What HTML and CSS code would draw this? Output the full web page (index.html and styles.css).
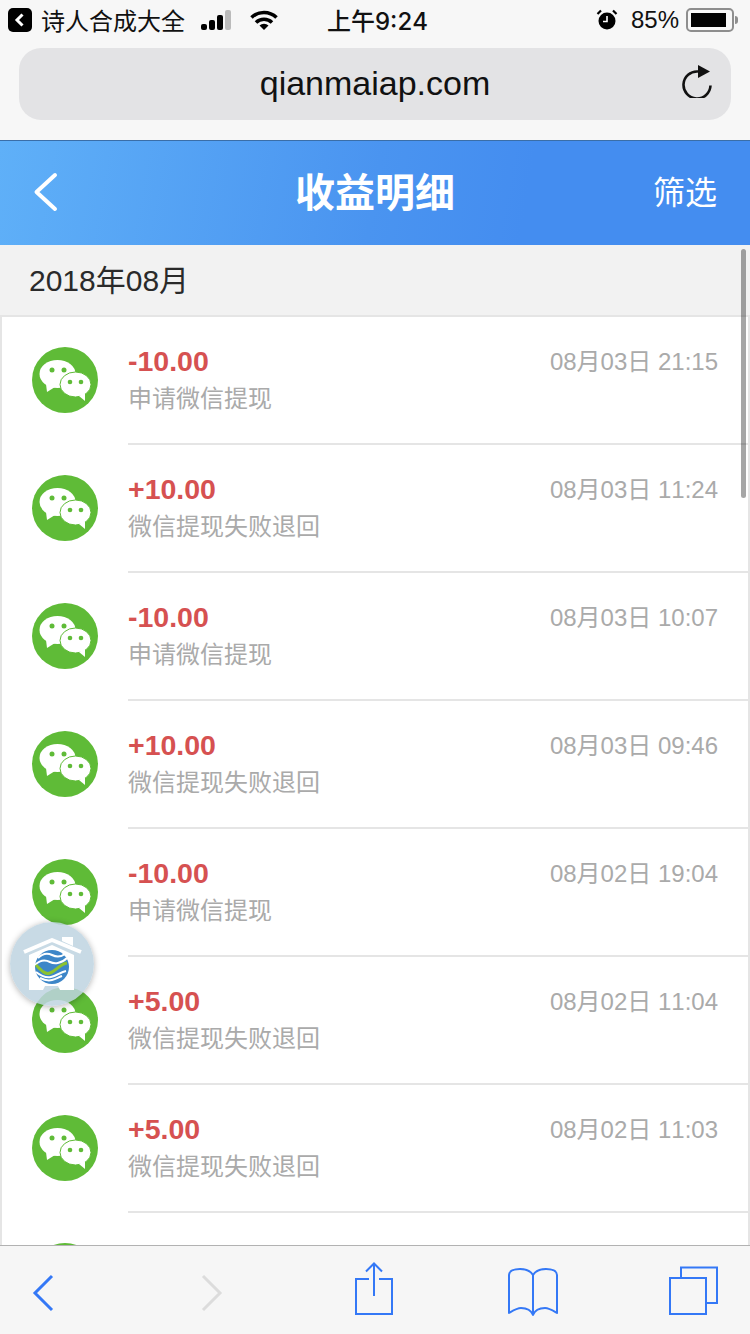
FILE: index.html
```html
<!DOCTYPE html>
<html lang="zh-CN">
<head>
  <meta charset="UTF-8" />
  <meta name="viewport" content="width=device-width, initial-scale=1.0"/>
  <title>收益明细</title>
  <link rel="stylesheet" href="styles.css">
</head>
<body>
  <svg class="defs" width="0" height="0">
    <symbol id="wechat" viewBox="0 0 66 66">
      <circle cx="33" cy="33" r="33" fill="#5fbb37"/>
      <ellipse cx="25.500" cy="27" rx="18" ry="14" fill="#fff"/>
      <path d="M14 37l1 8 8-5z" fill="#fff"/>
      <ellipse cx="43.500" cy="37.500" rx="15.500" ry="12.500" fill="#fff" stroke="#5fbb37" stroke-width="1"/>
      <path d="M47 49l6 5 0-8z" fill="#fff"/>
      <circle cx="20" cy="23" r="2.500" fill="#5fbb37"/>
      <circle cx="32" cy="23" r="2.500" fill="#5fbb37"/>
      <circle cx="38" cy="35" r="2.300" fill="#5fbb37"/>
      <circle cx="49" cy="35" r="2.300" fill="#5fbb37"/>
    </symbol>
  </svg>

  <div class="statusbar">
    <span class="app-back">
      <svg width="24" height="24" viewBox="0 0 24 24"><rect width="24" height="24" rx="5" fill="#000"/><path d="M14.500 6.500L9 12l5.500 5.500" fill="none" stroke="#fff" stroke-width="3"/></svg>
    </span>
    <span class="app-name">诗人合成大全</span>
    <span class="signal"><i class="b1"></i><i class="b2"></i><i class="b3"></i><i class="b4"></i></span>
    <svg class="wifi" width="28" height="20" viewBox="0 0 28 20">
      <path d="M1.500 7.500a18 18 0 0 1 25 0" fill="none" stroke="#000" stroke-width="3.600"/>
      <path d="M6 12.500a11.500 11.500 0 0 1 16 0" fill="none" stroke="#000" stroke-width="3.600"/>
      <path d="M9.500 15.500a6.500 6.500 0 0 1 9 0L14 20z" fill="#000"/>
    </svg>
    <span class="clock">上午9:24</span>
    <svg class="alarm" width="22" height="22" viewBox="0 0 22 22">
      <circle cx="11" cy="12" r="8.500" fill="#000"/>
      <path d="M11 7v5.500H7" fill="none" stroke="#fff" stroke-width="1.600"/>
      <path d="M1.500 5L5 1.500M20.500 5L17 1.500" stroke="#000" stroke-width="2.200"/>
    </svg>
    <span class="percent">85%</span>
    <span class="battery"><span class="level"></span></span>
    <span class="battery-tip"></span>
  </div>

  <div class="urlwrap">
    <div class="urlbar">
      <span class="url">qianmaiap.com</span>
      <svg class="reload" width="32" height="36" viewBox="0 0 32 36">
        <path d="M18 9.500a13.500 13.500 0 1 0 12.500 14" fill="none" stroke="#111" stroke-width="2.600"/>
        <path d="M18 3l12 6.500-12 6.500z" fill="#111"/>
      </svg>
    </div>
  </div>

  <header class="topbar">
    <svg class="nav-back" width="28" height="42" viewBox="0 0 28 42"><path d="M22 4L3.500 21 22 38" fill="none" stroke="#fff" stroke-width="4" stroke-linecap="round" stroke-linejoin="round"/></svg>
    <h1>收益明细</h1>
    <span class="filter">筛选</span>
  </header>

  <main class="content">
    <div class="month">2018年08月</div>
    <ul class="list">
      <li class="item">
        <svg class="pay-icon"><use href="#wechat"/></svg>
        <div class="info">
          <div class="line"><span class="amount">-10.00</span><span class="time">08月03日 21:15</span></div>
          <div class="desc">申请微信提现</div>
        </div>
      </li>
      <li class="item">
        <svg class="pay-icon"><use href="#wechat"/></svg>
        <div class="info">
          <div class="line"><span class="amount">+10.00</span><span class="time">08月03日 11:24</span></div>
          <div class="desc">微信提现失败退回</div>
        </div>
      </li>
      <li class="item">
        <svg class="pay-icon"><use href="#wechat"/></svg>
        <div class="info">
          <div class="line"><span class="amount">-10.00</span><span class="time">08月03日 10:07</span></div>
          <div class="desc">申请微信提现</div>
        </div>
      </li>
      <li class="item">
        <svg class="pay-icon"><use href="#wechat"/></svg>
        <div class="info">
          <div class="line"><span class="amount">+10.00</span><span class="time">08月03日 09:46</span></div>
          <div class="desc">微信提现失败退回</div>
        </div>
      </li>
      <li class="item">
        <svg class="pay-icon"><use href="#wechat"/></svg>
        <div class="info">
          <div class="line"><span class="amount">-10.00</span><span class="time">08月02日 19:04</span></div>
          <div class="desc">申请微信提现</div>
        </div>
      </li>
      <li class="item">
        <svg class="pay-icon"><use href="#wechat"/></svg>
        <div class="info">
          <div class="line"><span class="amount">+5.00</span><span class="time">08月02日 11:04</span></div>
          <div class="desc">微信提现失败退回</div>
        </div>
      </li>
      <li class="item">
        <svg class="pay-icon"><use href="#wechat"/></svg>
        <div class="info">
          <div class="line"><span class="amount">+5.00</span><span class="time">08月02日 11:03</span></div>
          <div class="desc">微信提现失败退回</div>
        </div>
      </li>
      <li class="item">
        <svg class="pay-icon"><use href="#wechat"/></svg>
        <div class="info"></div>
      </li>
    </ul>
    <div class="scrollbar"></div>
    <div class="float-home">
      <svg width="76" height="76" viewBox="0 0 76 76">
        <path d="M48 15V11h11v9z" fill="#fff"/>
        <path d="M10 26l28-12 29 12" fill="none" stroke="#fff" stroke-width="4" stroke-linejoin="round"/>
        <path d="M38 19L60 29v35H46l-2-4H31l-2 4H15V29z" fill="#fff"/>
        <circle cx="38" cy="41" r="17" fill="#3d86c8"/>
        <path d="M24 32c5-5 10-5 14-3s9 2 13-1" fill="none" stroke="#fff" stroke-width="2"/>
        <path d="M21 39c6-6 11-5 15-3s11 2 17-4" fill="none" stroke="#fff" stroke-width="2"/>
        <path d="M22 39c5 5 9 10 14 8 6-2 10-9 17-10" fill="none" stroke="#8cc22f" stroke-width="3"/>
        <path d="M22 46c5 4 10 6 15 5s10-5 15-6" fill="none" stroke="#fff" stroke-width="2"/>
        <path d="M26 52c4 2 8 3 12 2s7-3 10-4" fill="none" stroke="#fff" stroke-width="2"/>
      </svg>
    </div>
  </main>

  <footer class="toolbar">
    <svg class="tool-back" width="24" height="38" viewBox="0 0 24 38"><path d="M20 2L3 19l17 17" fill="none" stroke="#3478f6" stroke-width="3"/></svg>
    <svg class="tool-forward" width="24" height="38" viewBox="0 0 24 38"><path d="M3 2l17 17L3 36" fill="none" stroke="#dcdcdc" stroke-width="3"/></svg>
    <svg class="tool-share" width="40" height="54" viewBox="0 0 40 54">
      <path d="M15 17H2v35h36V17H25" fill="none" stroke="#3478f6" stroke-width="2"/>
      <path d="M20 34V2M12 9.500l8-8 8 8" fill="none" stroke="#3478f6" stroke-width="2"/>
    </svg>
    <svg class="tool-book" width="54" height="50" viewBox="0 0 54 50">
      <path d="M27 8C24 3 19 2 14 2 8 2 3 4 3 8v38c5-3 8-5 12-5 5 0 10 2 12 7 2-5 7-7 12-7 4 0 7 2 12 5V8c0-4-5-6-11-6-5 0-10 1-13 6zm0 0v40" fill="none" stroke="#3478f6" stroke-width="2" stroke-linejoin="round"/>
    </svg>
    <svg class="tool-tabs" width="52" height="50" viewBox="0 0 52 50">
      <path d="M14 13V2.500h36V38H40" fill="none" stroke="#3478f6" stroke-width="2"/>
      <rect x="3" y="13" width="36" height="36" fill="none" stroke="#3478f6" stroke-width="2"/>
    </svg>
  </footer>
</body>
</html>
```

FILE: styles.css
```css
* {
  box-sizing: border-box;
}
html, body {
  margin: 0;
  padding: 0;
}
body {
  width: 750px;
  height: 1334px;
  overflow: hidden;
  display: flex;
  flex-direction: column;
  font-family: "Liberation Sans", "Noto Sans CJK SC", sans-serif;
  font-kerning: none;
  background: #f7f7f7;
}
.defs {
  position: absolute;
}
.statusbar {
  height: 44px;
  flex: none;
  display: flex;
  align-items: center;
  padding: 0 0 4px 8px;
  color: #111;
  background: #f7f7f7;
}
.app-back {
  display: flex;
}
.app-name {
  margin-left: 9px;
  margin-bottom: 2px;
  font-size: 24px;
  width: 145px;
  white-space: nowrap;
}
.signal {
  display: flex;
  align-items: flex-end;
  gap: 2px;
  margin-left: 15px;
  width: 34px;
}
.signal i {
  display: block;
  width: 6px;
  background: #000;
  border-radius: 2px;
}
.signal .b1 { height: 6px; }
.signal .b2 { height: 10px; }
.signal .b3 { height: 15px; }
.signal .b4 { height: 20px; background: #bbb; }
.wifi {
  margin-left: 15px;
}
.clock {
  margin-left: 49px;
  margin-bottom: 2px;
  font-family: "Inter", "Noto Sans CJK SC", sans-serif;
  font-size: 24px;
  font-weight: 500;
  width: 103px;
  white-space: nowrap;
}
.alarm {
  margin-left: 166px;
}
.percent {
  margin-left: 13px;
  font-size: 24px;
}
.battery {
  margin-left: 7px;
  width: 48px;
  height: 24px;
  padding: 3px;
  border: 2px solid #8e8e8e;
  border-radius: 5px;
}
.battery .level {
  display: block;
  width: 35px;
  height: 14px;
  background: #000;
}
.battery-tip {
  width: 3px;
  height: 8px;
  margin-left: 1px;
  background: #8e8e8e;
  border-radius: 0 3px 3px 0;
}
.urlwrap {
  height: 97px;
  flex: none;
  padding: 4px 19px 0;
  border-bottom: 1px solid #3a6ea8;
}
.urlbar {
  position: relative;
  height: 72px;
  background: #e3e3e5;
  border-radius: 22px;
  display: flex;
  align-items: center;
  justify-content: center;
}
.url {
  font-size: 34px;
  color: #111;
  padding-bottom: 2px;
}
.reload {
  position: absolute;
  right: 19px;
  top: 14px;
}
.topbar {
  height: 104px;
  flex: none;
  display: flex;
  align-items: center;
  justify-content: space-between;
  padding: 0 33px;
  color: #fff;
  background: linear-gradient(100deg, #5fb0f8 0%, #4a94f0 50%, #448df0 70%);
  position: relative;
}
.nav-back {
  margin-top: -2px;
}
.topbar h1 {
  position: absolute;
  left: 0;
  right: 0;
  margin: 0;
  padding-bottom: 6px;
  text-align: center;
  font-size: 40px;
  font-weight: bold;
}
.filter {
  font-size: 32px;
  margin-bottom: 6px;
}
.content {
  flex: 1;
  position: relative;
  overflow: hidden;
  background: #f2f2f2;
}
.month {
  height: 70px;
  padding: 0 29px 4px;
  display: flex;
  align-items: center;
  font-size: 30px;
  color: #2a2a2a;
}
.list {
  margin: 0;
  padding: 0;
  list-style: none;
  background: #fff;
  border-top: 2px solid #e5e5e5;
  border-left: 2px solid #e5e5e5;
  border-right: 2px solid #e5e5e5;
}
.item {
  height: 128px;
  display: flex;
}
.pay-icon {
  width: 66px;
  height: 66px;
  flex: none;
  margin: 30px;
}
.info {
  flex: 1;
  padding-top: 27px;
  padding-right: 30px;
  border-bottom: 2px solid #e5e5e5;
}
.line {
  display: flex;
  justify-content: space-between;
  align-items: center;
  height: 36px;
}
.amount {
  margin-bottom: 2px;
  font-size: 28.500px;
  font-weight: bold;
  color: #d65151;
}
.time {
  margin-bottom: 6px;
  font-size: 24px;
  color: #aaa;
}
.desc {
  margin-top: 1px;
  font-size: 24px;
  line-height: 36px;
  color: #aaa;
}
.scrollbar {
  position: absolute;
  top: 4px;
  right: 4px;
  width: 5px;
  height: 249px;
  border-radius: 3px;
  background: rgba(0, 0, 0, 0.35);
}
.float-home {
  position: absolute;
  left: 10px;
  top: 677px;
  width: 84px;
  height: 84px;
  border-radius: 50%;
  background: rgba(190, 212, 224, 0.85);
  box-shadow: 0 1px 6px rgba(0, 0, 0, 0.3);
  display: flex;
  align-items: center;
  justify-content: center;
}
.toolbar {
  height: 89px;
  flex: none;
  background: #f6f6f6;
  border-top: 1px solid #b2b2b2;
  display: flex;
  align-items: flex-start;
  padding-left: 32px;
}
.tool-back {
  margin-top: 28px;
}
.tool-forward {
  margin: 28px 0 0 144px;
}
.tool-share {
  margin: 16px 0 0 130px;
}
.tool-book {
  margin: 21px 0 0 112px;
}
.tool-tabs {
  margin: 19px 0 0 107px;
}
```
